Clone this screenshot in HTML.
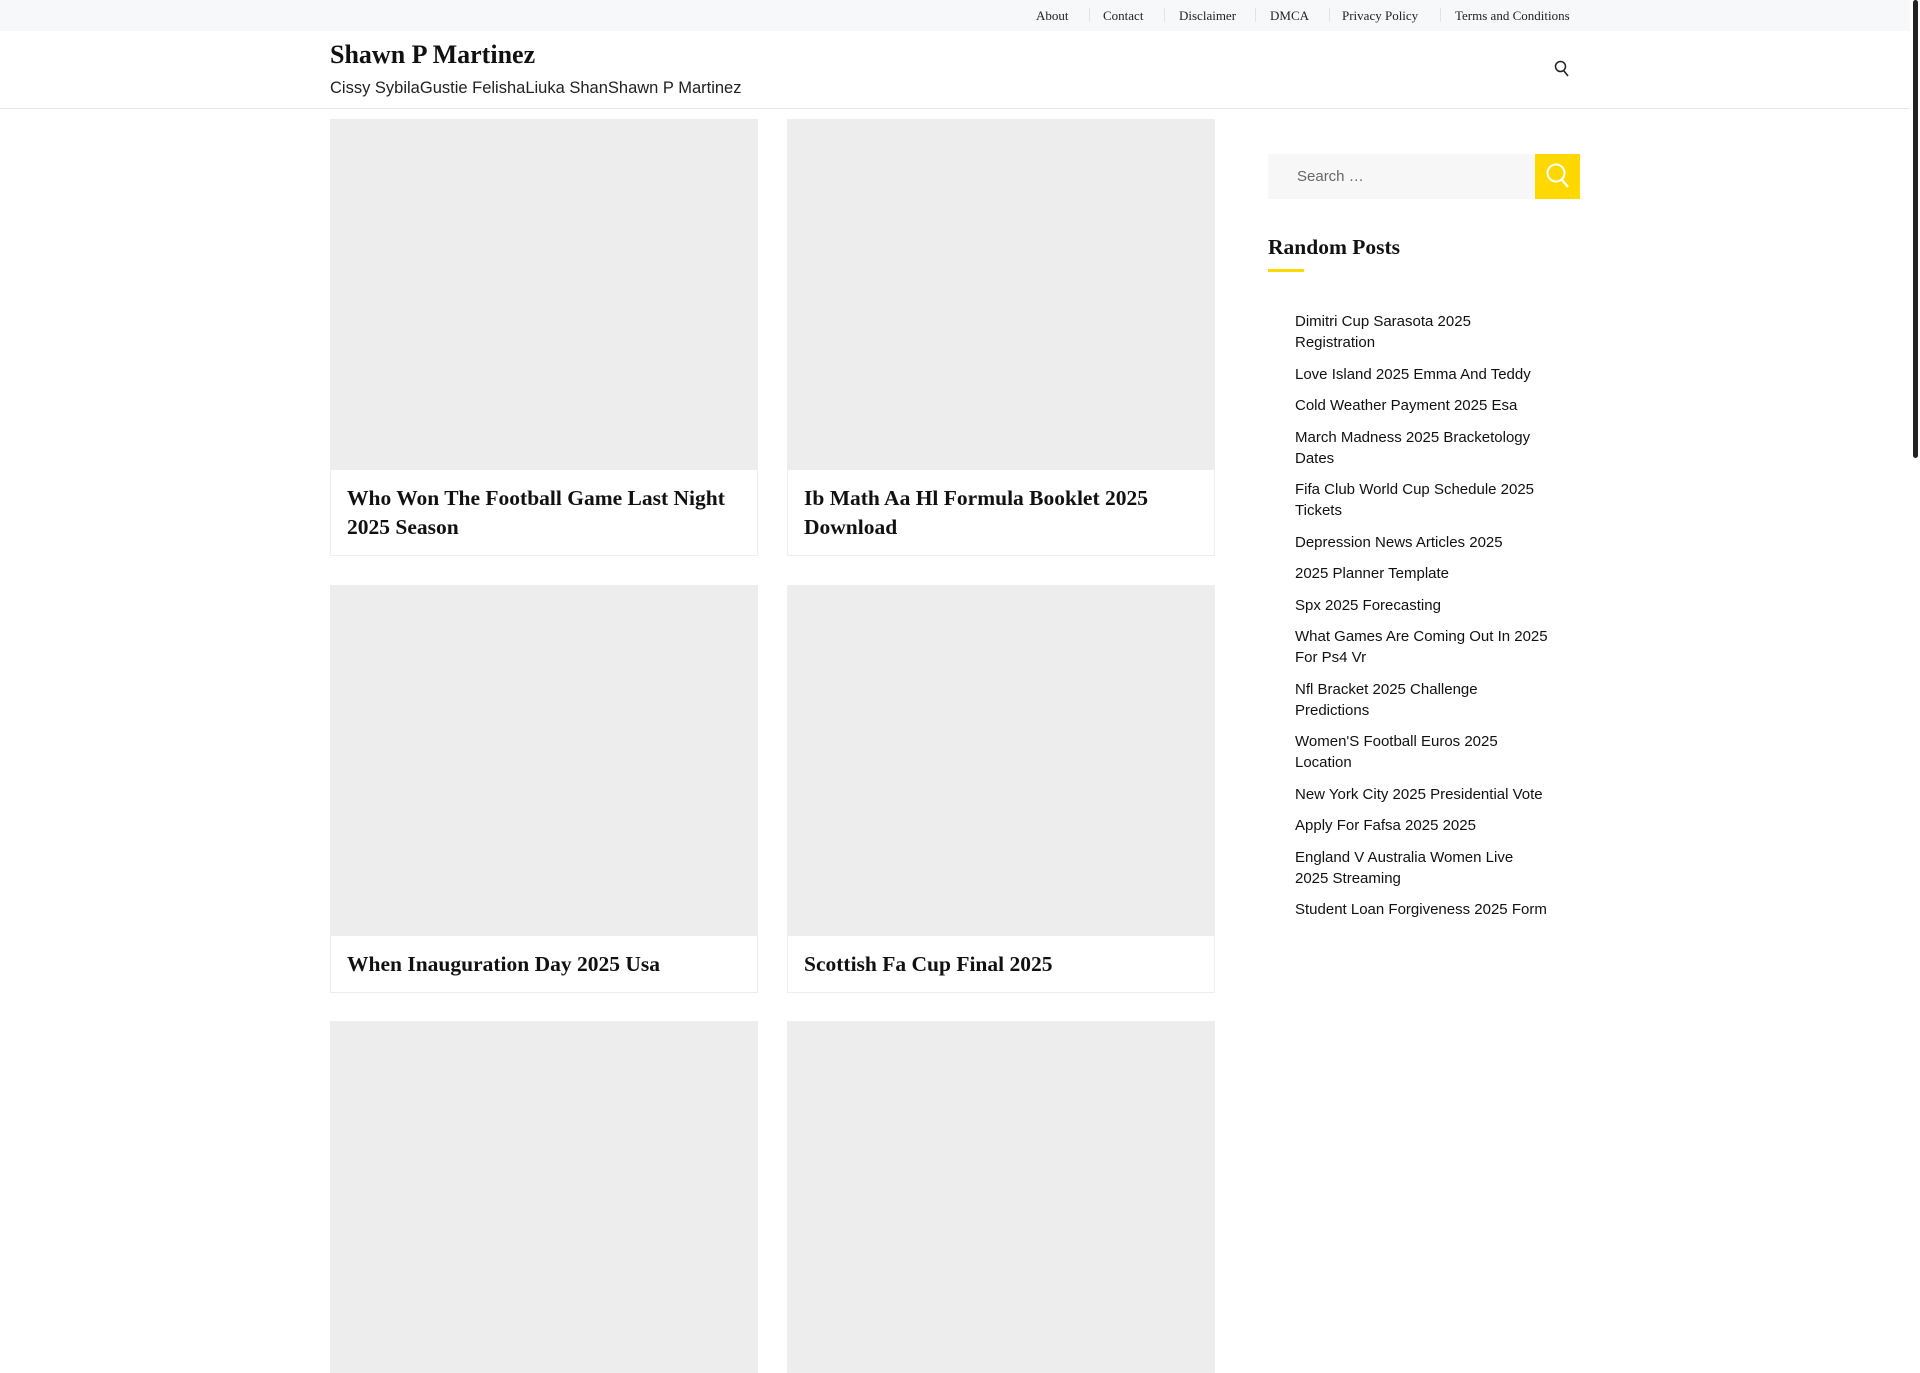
<!DOCTYPE html>
<html><head><meta charset="utf-8"><style>
*{box-sizing:border-box;margin:0;padding:0}
body{width:1920px;height:1080px;overflow:hidden;background:#fff;font-family:"Liberation Sans",sans-serif;color:#111;position:relative}
.top{position:absolute;left:0;top:0;width:1910px;height:31px;background:#f7f8f9}
.top a{position:absolute;top:8px;font:13px "Liberation Serif",serif;color:#222;text-decoration:none}
.sep{position:absolute;top:8px;width:1px;height:14px;background:#e3e3e3}
.hdr{position:absolute;left:0;top:31px;width:1910px;height:78px;border-bottom:1px solid #e6e6e6}
.title{position:absolute;left:330px;top:9px;font:bold 26px "Liberation Serif",serif}
.tag{position:absolute;left:330px;top:48px;font-size:16.5px;color:#222}
.card{position:absolute;width:428px;border:1px solid #eee;background:#fff}
.card .img{height:350px;background:#ededed}
.card h2{font:bold 21.5px/29px "Liberation Serif",serif;padding:14px 16px 13px 16px}
.sb{position:absolute;right:0;top:0;width:10px;height:1080px;background:#fff}
.thumb{position:absolute;right:2px;top:0;width:5px;height:458px;background:#222;border-radius:3px}
ul{position:absolute;left:1295px;top:311px;width:280px;list-style:none;font-size:15px;line-height:21px;color:#111;white-space:nowrap}
li{margin-bottom:10.5px}
</style></head><body>
<div class="top">
<a style="left:1036px">About</a><span class="sep" style="left:1089px"></span>
<a style="left:1103px">Contact</a><span class="sep" style="left:1164px"></span>
<a style="left:1179px">Disclaimer</a><span class="sep" style="left:1255px"></span>
<a style="left:1270px">DMCA</a><span class="sep" style="left:1329px"></span>
<a style="left:1342px">Privacy Policy</a><span class="sep" style="left:1440px"></span>
<a style="left:1455px">Terms and Conditions</a>
</div>
<div class="hdr">
<div class="title">Shawn P Martinez</div>
<div class="tag">Cissy SybilaGustie FelishaLiuka ShanShawn P Martinez</div>
<svg style="position:absolute;left:1554px;top:29px" width="16" height="18" viewBox="0 0 16 18"><circle cx="6.5" cy="6.5" r="5" fill="none" stroke="#222" stroke-width="1.5"/><path d="M10 11l4 5" stroke="#222" stroke-width="1.6"/></svg>
</div>
<div class="card" style="left:330px;top:119px"><div class="img"></div><h2>Who Won The Football Game Last Night 2025 Season</h2></div>
<div class="card" style="left:787px;top:119px"><div class="img"></div><h2>Ib Math Aa Hl Formula Booklet 2025 Download</h2></div>
<div class="card" style="left:330px;top:585px"><div class="img"></div><h2>When Inauguration Day 2025 Usa</h2></div>
<div class="card" style="left:787px;top:585px"><div class="img"></div><h2>Scottish Fa Cup Final 2025</h2></div>
<div class="card" style="left:330px;top:1021px"><div class="img"></div></div>
<div class="card" style="left:787px;top:1021px"><div class="img"></div></div>
<div style="position:absolute;left:1268px;top:154px;width:267px;height:45px;background:#f7f7f7"></div>
<div style="position:absolute;left:1297px;top:168px;font-size:15px;color:#666">Search …</div>
<div style="position:absolute;left:1535px;top:154px;width:45px;height:45px;background:#ffd800"></div>
<svg style="position:absolute;left:1545px;top:162px" width="26" height="28" viewBox="0 0 26 28"><circle cx="11" cy="11" r="8.5" fill="none" stroke="#fff" stroke-width="2"/><path d="M17 18l6 7" stroke="#fff" stroke-width="2.2"/></svg>
<div style="position:absolute;left:1268px;top:235px;font:bold 21.5px 'Liberation Serif',serif">Random Posts</div>
<div style="position:absolute;left:1268px;top:269px;width:36px;height:3px;background:#ffd800"></div>
<ul>
<li>Dimitri Cup Sarasota 2025<br>Registration</li>
<li>Love Island 2025 Emma And Teddy</li>
<li>Cold Weather Payment 2025 Esa</li>
<li>March Madness 2025 Bracketology<br>Dates</li>
<li>Fifa Club World Cup Schedule 2025<br>Tickets</li>
<li>Depression News Articles 2025</li>
<li>2025 Planner Template</li>
<li>Spx 2025 Forecasting</li>
<li>What Games Are Coming Out In 2025<br>For Ps4 Vr</li>
<li>Nfl Bracket 2025 Challenge<br>Predictions</li>
<li>Women'S Football Euros 2025<br>Location</li>
<li>New York City 2025 Presidential Vote</li>
<li>Apply For Fafsa 2025 2025</li>
<li>England V Australia Women Live<br>2025 Streaming</li>
<li>Student Loan Forgiveness 2025 Form</li>
</ul>
<div class="sb"><div class="thumb"></div></div>
</body></html>
